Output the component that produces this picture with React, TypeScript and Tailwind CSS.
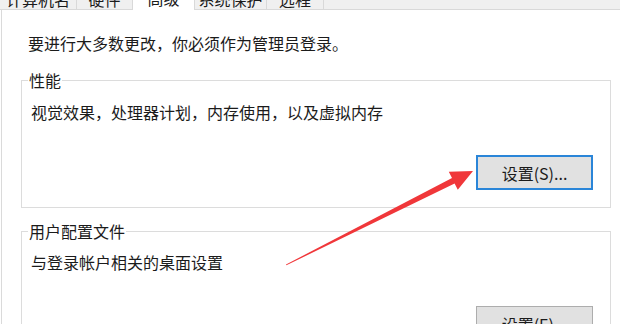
import React from "react";

const tabs = [
  { label: "计算机名", w: "w-[77px]" },
  { label: "硬件", w: "w-[56px]" },
  { label: "高级", w: "w-[62px]", active: true },
  { label: "系统保护", w: "w-[72px]" },
  { label: "远程", w: "w-[57px]" },
];

export default function App() {
  return (
    <div
      className="relative w-[620px] h-[324px] overflow-hidden bg-white text-[16px] leading-[16px] text-[#1b1b1b]"
      style={{ fontFamily: '"Noto Sans CJK SC", "Noto Sans", sans-serif' }}
    >
      {/* tab strip, mostly scrolled off the top */}
      <div className="flex h-[30px] -mt-[20px]">
        {tabs.map((t) =>
          t.active ? (
            <div key={t.label} className={`${t.w} flex items-end justify-center pb-[4px] bg-white border-r border-[#d9d9d9]`}>
              {t.label}
            </div>
          ) : (
            <div key={t.label} className={`${t.w} flex items-end justify-center pb-[2px] bg-[#f0f0f0] border-r border-b border-[#d9d9d9]`}>
              {t.label}
            </div>
          )
        )}
        <div className="flex-1 bg-[#f0f0f0] border-b border-[#d9d9d9]" />
      </div>

      {/* panel */}
      <div className="ml-[1px] h-[314px] border-l border-[#dadada]">
        <div className="ml-[26px] pt-[25px]">要进行大多数更改，你必须作为管理员登录。</div>

        <fieldset className="ml-[19px] mt-[21px] w-[590px] border border-[#dcdcdc] pl-[6px] pr-[7px] pb-[17px]">
          <legend className="px-[1px]">性能</legend>
          <div className="ml-[3px] mt-[16px]">视觉效果，处理器计划，内存使用，以及虚拟内存</div>
          <div className="flex justify-end mt-[35px] mr-[10px]">
            <button className="w-[117px] h-[35px] bg-[#e1e1e1] border-2 border-[#2a85d8] flex items-center justify-center">
              设置(S)...
            </button>
          </div>
        </fieldset>

        <fieldset className="ml-[19px] mt-[15px] w-[590px] h-[120px] border border-[#dcdcdc] pl-[6px] pr-[7px]">
          <legend className="px-[1px]">用户配置文件</legend>
          <div className="ml-[3px] mt-[15px]">与登录帐户相关的桌面设置</div>
          <div className="flex justify-end mt-[36px] mr-[10px]">
            <button className="w-[117px] h-[35px] bg-[#e1e1e1] border border-[#adadad] flex items-center justify-center">
              设置(E)...
            </button>
          </div>
        </fieldset>
      </div>

      {/* red annotation arrow */}
      <svg className="absolute left-0 top-0 pointer-events-none" width="620" height="324" viewBox="0 0 620 324">
        <polygon
          fill="#f0373a"
          points="286,264.5 452,178 448.8,171.8 473,171 457.8,189.8 454.6,183.5 286.4,265.3"
        />
      </svg>
    </div>
  );
}
